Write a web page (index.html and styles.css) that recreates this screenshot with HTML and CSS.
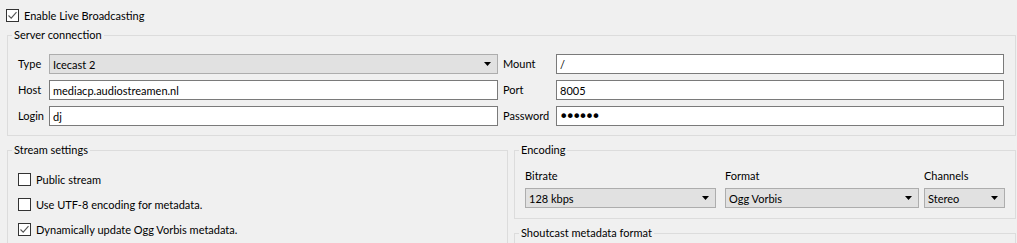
FILE: index.html
```html
<!DOCTYPE html>
<html lang="en">
<head>
  <meta charset="UTF-8" />
  <title>Live Broadcasting</title>
  <link rel="stylesheet" href="styles.css">
</head>
<body>

  <!-- Enable toggle -->
  <label class="check">
    <span class="box checked"><svg viewBox="0 0 11 11"><path d="M1.5 5.5 L4.2 8.2 L9.5 2.2" /></svg></span>
    Enable Live Broadcasting
  </label>

  <!-- Server connection -->
  <fieldset class="group">
    <legend>Server connection</legend>
    <div class="server-grid">
      <span class="lbl">Type</span>
      <div class="combo">Icecast 2<svg class="arrow" viewBox="0 0 7 4"><path d="M0 0 H7 L3.5 4 Z" /></svg></div>
      <span class="lbl lbl-right">Mount</span>
      <input class="field" type="text" value="/" />

      <span class="lbl">Host</span>
      <input class="field" type="text" value="mediacp.audiostreamen.nl" />
      <span class="lbl lbl-right">Port</span>
      <input class="field" type="text" value="8005" />

      <span class="lbl">Login</span>
      <input class="field" type="text" value="dj" />
      <span class="lbl lbl-right">Password</span>
      <input class="field password" type="password" value="secret" />
    </div>
  </fieldset>

  <div class="lower">

    <!-- Stream settings -->
    <fieldset class="group stream">
      <legend>Stream settings</legend>
      <div class="stream-list">
        <label class="check">
          <span class="box"></span>
          Public stream
        </label>
        <label class="check">
          <span class="box"></span>
          Use UTF-8 encoding for metadata.
        </label>
        <label class="check">
          <span class="box checked"><svg viewBox="0 0 11 11"><path d="M1.5 5.5 L4.2 8.2 L9.5 2.2" /></svg></span>
          Dynamically update Ogg Vorbis metadata.
        </label>
      </div>
    </fieldset>

    <div class="right-col">
      <!-- Encoding -->
      <fieldset class="group">
        <legend>Encoding</legend>
        <div class="enc-row">
          <div class="enc bitrate">
            <span class="lbl">Bitrate</span>
            <div class="combo">128 kbps<svg class="arrow" viewBox="0 0 7 4"><path d="M0 0 H7 L3.5 4 Z" /></svg></div>
          </div>
          <div class="enc format">
            <span class="lbl">Format</span>
            <div class="combo">Ogg Vorbis<svg class="arrow" viewBox="0 0 7 4"><path d="M0 0 H7 L3.5 4 Z" /></svg></div>
          </div>
          <div class="enc channels">
            <span class="lbl">Channels</span>
            <div class="combo">Stereo<svg class="arrow" viewBox="0 0 7 4"><path d="M0 0 H7 L3.5 4 Z" /></svg></div>
          </div>
        </div>
      </fieldset>

      <!-- Shoutcast metadata -->
      <fieldset class="group shoutcast">
        <legend>Shoutcast metadata format</legend>
      </fieldset>
    </div>

  </div>

</body>
</html>
```

FILE: styles.css
```css
/* General Styling */
body {
  font-family: Lato, "Noto Sans", sans-serif;
  font-size: 11px;
  color: #000;
  background: #f0f0f0;
  margin: 0;
  padding: 7px 1px 0 6px;
  overflow: hidden;
}

/* Checkboxes */
.check {
  display: flex;
  align-items: center;
  gap: 5px;
  height: 17px;
  line-height: 17px;
  white-space: nowrap;
}

.box {
  width: 11px;
  height: 11px;
  border: 1px solid #333;
  background: #fff;
  display: flex;
}

.box svg {
  width: 11px;
  height: 11px;
}

.box svg path {
  fill: none;
  stroke: #555;
  stroke-width: 1.1;
}

/* Group boxes */
.group {
  margin: 0;
  padding: 0;
  border: 1px solid #dcdcdc;
  min-width: 0;
}

.group legend {
  margin-left: 4px;
  padding: 0 2px;
  line-height: 16px;
}

body > .group {
  margin: 3px 0 0 1px;
}

/* Server connection */
.server-grid {
  display: grid;
  grid-template-columns: 31px 449px 58px 448px;
  grid-auto-rows: 20px;
  row-gap: 6px;
  padding: 11px 11px 9px 10px;
}

.lbl {
  line-height: 20px;
}

.lbl-right {
  padding-left: 5px;
}

.field {
  box-sizing: border-box;
  height: 20px;
  margin: 0;
  padding: 0 3px;
  border: 1px solid #7a7a7a;
  background: #fff;
  font: inherit;
  color: #000;
  outline: none;
}

.password {
  font-family: "DejaVu Sans", sans-serif;
  font-size: 16px;
  letter-spacing: -3px;
  padding-left: 2px;
}

.combo {
  box-sizing: border-box;
  height: 20px;
  display: flex;
  align-items: center;
  justify-content: space-between;
  padding: 0 6px 0 3px;
  border: 1px solid #adadad;
  background: #e1e1e1;
}

.arrow {
  width: 7px;
  height: 4px;
}

.arrow path {
  fill: #000;
}

/* Lower part */
.lower {
  display: flex;
  gap: 6px;
  margin: 6px 0 0 1px;
}

.stream {
  width: 501px;
  box-sizing: border-box;
  height: 200px;
}

.stream-list {
  display: flex;
  flex-direction: column;
  gap: 8px;
  padding: 13px 0 0 10px;
}

.right-col {
  flex: 1;
  display: flex;
  flex-direction: column;
}

.enc-row {
  display: flex;
  padding: 10px 0 10px 10px;
}

.enc {
  display: flex;
  flex-direction: column;
  gap: 4px;
}

.enc .lbl {
  line-height: 16px;
}

.bitrate {
  width: 191px;
  margin-right: 9px;
}

.format {
  width: 194px;
  margin-right: 5px;
}

.channels {
  width: 81px;
}

.shoutcast {
  margin-top: 6px;
  height: 100px;
}
```
